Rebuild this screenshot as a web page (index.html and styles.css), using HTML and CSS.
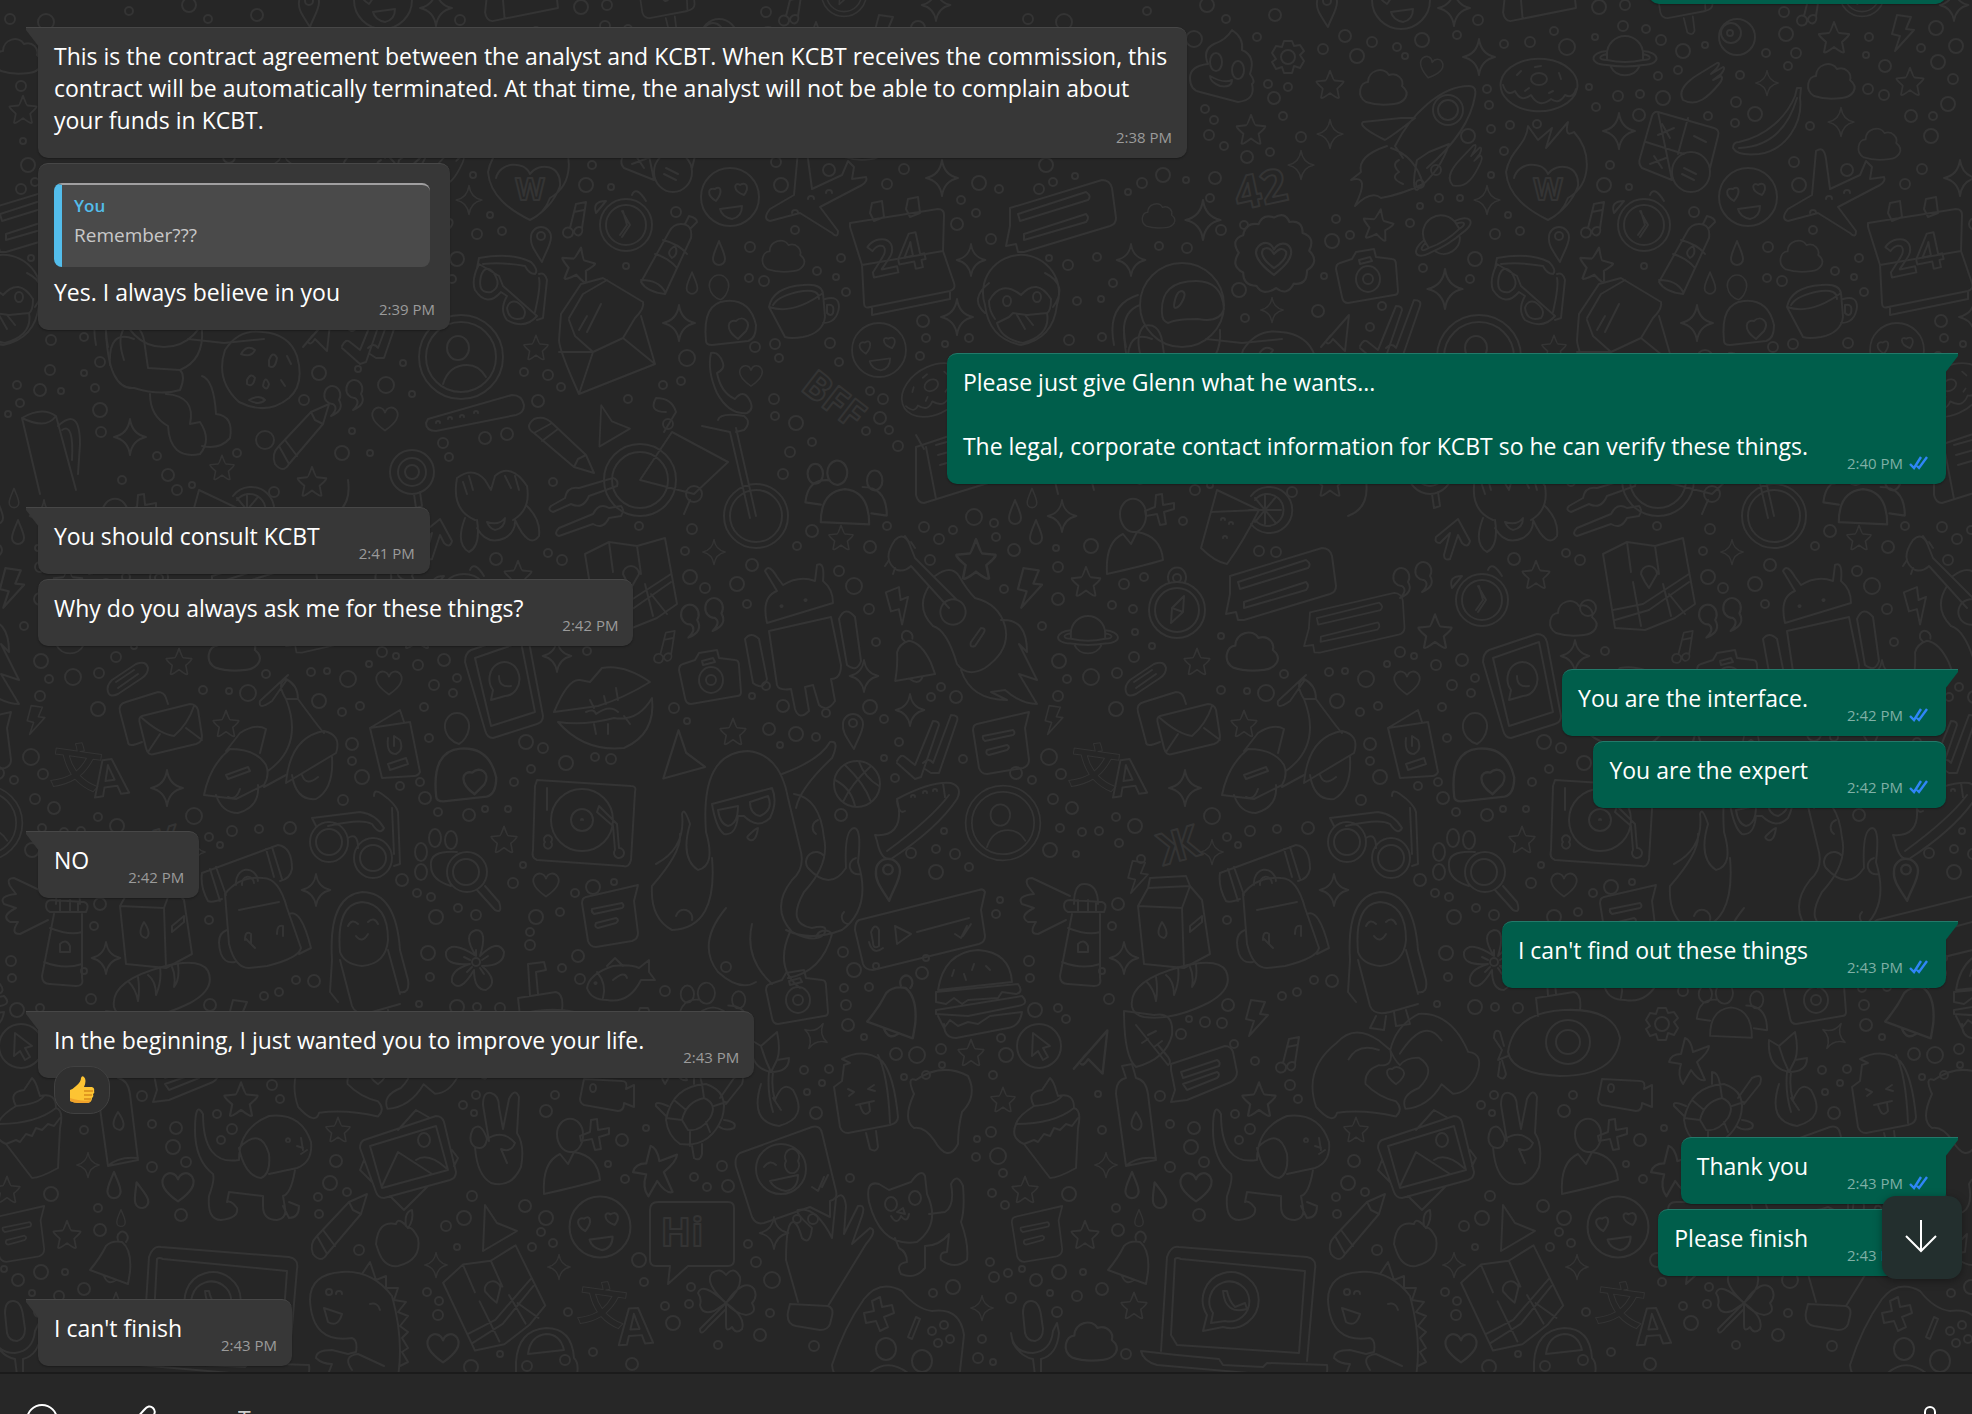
FILE: index.html
```html
<!DOCTYPE html>
<html lang="en">
<head>
  <meta charset="UTF-8">
  <meta name="viewport" content="width=device-width, initial-scale=1.0">
  <title>Chat</title>
  <link rel="stylesheet" href="styles.css">
</head>
<body>
  <svg class="sprite" width="0" height="0" aria-hidden="true">
    <symbol id="ticks" viewBox="0 0 20 14">
      <path d="M1 8l4 4L12 1M8 10l2 2L18 1" fill="none" stroke="#2f86f7" stroke-width="2.4"/>
    </symbol>
  </svg>

  <main class="chat">
    <svg class="wallpaper" id="wallpaper" aria-hidden="true"></svg>

    <div class="messages">
      <div class="bubble out earlier"></div>

      <div class="bubble in first long">
        <p class="text">This is the contract agreement between the analyst and KCBT. When KCBT receives the commission, this contract will be automatically terminated. At that time, the analyst will not be able to complain about your funds in KCBT.</p>
        <div class="meta">2:38 PM</div>
      </div>

      <div class="bubble in">
        <div class="quote">
          <div class="quote-name">You</div>
          <div class="quote-text">Remember???</div>
        </div>
        <p class="text">Yes. I always believe in you</p>
        <div class="meta">2:39 PM</div>
      </div>

      <div class="bubble out first">
        <p class="text">Please just give Glenn what he wants...<br><br>The legal, corporate contact information for KCBT so he can verify these things.</p>
        <div class="meta">2:40 PM <svg class="ticks"><use href="#ticks"/></svg></div>
      </div>

      <div class="bubble in first">
        <p class="text">You should consult KCBT</p>
        <div class="meta">2:41 PM</div>
      </div>
      <div class="bubble in">
        <p class="text">Why do you always ask me for these things?</p>
        <div class="meta">2:42 PM</div>
      </div>

      <div class="bubble out first">
        <p class="text">You are the interface.</p>
        <div class="meta">2:42 PM <svg class="ticks"><use href="#ticks"/></svg></div>
      </div>
      <div class="bubble out">
        <p class="text">You are the expert</p>
        <div class="meta">2:42 PM <svg class="ticks"><use href="#ticks"/></svg></div>
      </div>

      <div class="bubble in first">
        <p class="text">NO</p>
        <div class="meta">2:42 PM</div>
      </div>

      <div class="bubble out first">
        <p class="text">I can't find out these things</p>
        <div class="meta">2:43 PM <svg class="ticks"><use href="#ticks"/></svg></div>
      </div>

      <div class="bubble in first reacted">
        <p class="text">In the beginning, I just wanted you to improve your life.</p>
        <div class="meta">2:43 PM</div>
        <button class="reaction" aria-label="Thumbs up">
          <svg width="26" height="28" viewBox="0 0 26 28">
            <path d="M1 14Q4 13 7 10Q12 6 12 2Q13-1 15 1Q18 4 15 11H23Q26 12 25 15Q26 17 24 18Q25 21 23 22Q23 26 19 27H10Q5 27 1 25Z" fill="#fdc433"/>
            <path d="M15 15h9M15 19h8M15 23h7" stroke="#d98a1b" stroke-width="1.5" fill="none"/>
            <path d="M1 25Q5 27 10 27H19Q22 26 22 24Q14 26 1 22Z" fill="#f0a22b"/>
          </svg>
        </button>
      </div>

      <div class="bubble out first">
        <p class="text">Thank you</p>
        <div class="meta">2:43 PM <svg class="ticks"><use href="#ticks"/></svg></div>
      </div>
      <div class="bubble out">
        <p class="text">Please finish</p>
        <div class="meta">2:43 PM <svg class="ticks"><use href="#ticks"/></svg></div>
      </div>

      <div class="bubble in first">
        <p class="text">I can't finish</p>
        <div class="meta">2:43 PM</div>
      </div>
    </div>

    <button class="scroll-down" aria-label="Scroll to latest">
      <svg width="32" height="34" viewBox="0 0 32 34">
        <path d="M16 1V32M1 17L16 32L31 17" fill="none" stroke="#fff" stroke-width="2"/>
      </svg>
    </button>
  </main>

  <footer class="composer">
    <button class="tool" aria-label="Emoji">
      <svg width="32" height="34" viewBox="0 0 32 34" fill="none" stroke="#fff" stroke-width="2">
        <circle cx="16" cy="18" r="15"/>
        <path d="M9 22Q16 29 23 22M11 14v1M21 14v1"/>
      </svg>
    </button>
    <button class="tool" aria-label="Attach">
      <svg width="32" height="34" viewBox="0 0 32 34" fill="none" stroke="#fff" stroke-width="2">
        <path d="M3 18L12 8Q17 2 21 6Q25 10 20 15L10 26"/>
      </svg>
    </button>
    <input class="entry" type="text" aria-label="Message" placeholder="Type a message">
    <button class="tool" aria-label="Voice message">
      <svg width="32" height="34" viewBox="0 0 32 34" fill="none" stroke="#fff" stroke-width="2">
        <rect x="11" y="5" width="10" height="18" rx="5"/>
        <path d="M6 18Q6 28 16 28Q26 28 26 18M16 28v5"/>
      </svg>
    </button>
  </footer>

  <script src="wallpaper.js"></script>
</body>
</html>
```

FILE: styles.css
```css
* {
  box-sizing: border-box;
}
body {
  margin: 0;
  height: 100vh;
  display: flex;
  flex-direction: column;
  overflow: hidden;
  background-color: #262626;
  color: #fff;
  font-family: "Segoe UI", "Open Sans", "Noto Sans", sans-serif;
}
button {
  padding: 0;
  border: none;
  background: none;
  cursor: pointer;
}
.sprite {
  position: absolute;
}

/* chat area */
.chat {
  flex: 1;
  min-height: 0;
  position: relative;
  display: flex;
  flex-direction: column;
  justify-content: flex-end;
  overflow: hidden;
}
.wallpaper {
  position: absolute;
  top: 0;
  left: 0;
  width: 100%;
  height: 100%;
  fill: none;
  stroke: #343434;
  stroke-width: 2;
  stroke-linejoin: round;
  stroke-linecap: round;
}
.wallpaper text {
  font-family: "Open Sans", "Noto Sans CJK SC", sans-serif;
  font-weight: 700;
  text-anchor: middle;
}
.messages {
  position: relative;
  display: flex;
  flex-direction: column;
  gap: 5px;
  padding: 0 26px 6px 38px;
}

/* bubbles */
.bubble {
  position: relative;
  max-width: 1149px;
  padding: 12px 15px 11px 16px;
  border-top: 1px solid;
  border-radius: 10px;
  box-shadow: 0 1px 2px rgba(0,0,0,0.3);
}
.in {
  align-self: flex-start;
  background-color: #373737;
  border-color: #474747;
}
.out {
  align-self: flex-end;
  background-color: #005e4b;
  border-color: #23796a;
}
.earlier {
  width: 297px;
  height: 67px;
}
.first {
  margin-top: 18px;
}
.in.first {
  border-top-left-radius: 0;
}
.out.first {
  border-top-right-radius: 0;
}
.first::before {
  content: "";
  position: absolute;
  top: -1px;
  width: 13px;
  height: 19px;
  background-color: inherit;
  border-top: 1px solid;
  border-color: inherit;
}
.in.first::before {
  left: -12px;
  clip-path: polygon(0 0, 100% 0, 100% 100%, 0 3px);
}
.out.first::before {
  right: -12px;
  clip-path: polygon(0 0, 100% 0, 100% 3px, 0 100%);
}
.text {
  margin: 0;
  font-size: 23px;
  line-height: 32px;
}
.in .text {
  padding-right: 95px;
}
.out .text {
  padding-right: 123px;
}
.in.long .text {
  padding-right: 0;
}
.meta {
  display: flex;
  justify-content: flex-end;
  align-items: center;
  gap: 6px;
  margin-top: -9px;
  font-size: 15px;
  line-height: 20px;
  color: #9b9b9b;
}
.out .meta {
  padding-right: 2px;
  color: #7fb0a6;
}
.ticks {
  width: 20px;
  height: 14px;
}

.quote {
  margin: 7px 5px 9px 0;
  height: 84px;
  padding: 9px 12px;
  background-color: #4a4a4a;
  border-top: 2px solid #a09fa0;
  border-left: 8px solid #53bdeb;
  border-radius: 8px;
  line-height: 24px;
}
.quote-name {
  font-size: 17px;
  font-weight: 600;
  color: #53bdeb;
}
.quote-text {
  margin-top: 5px;
  font-size: 19px;
  color: #c8c8c8;
}

.reacted {
  margin-bottom: 36px;
}
.reaction {
  position: absolute;
  left: 16px;
  bottom: -36px;
  display: flex;
  justify-content: center;
  align-items: center;
  width: 56px;
  height: 48px;
  background-color: #303030;
  border: 1px solid #414141;
  border-radius: 20px;
}

.scroll-down {
  position: absolute;
  right: 10px;
  bottom: 93px;
  display: flex;
  justify-content: center;
  align-items: center;
  width: 80px;
  height: 83px;
  padding: 0 2px 4px 0;
  background-color: #232f2e;
  border-radius: 14px;
  box-shadow: 0 2px 8px rgba(0,0,0,0.35);
}

/* message box */
.composer {
  flex: none;
  display: flex;
  align-items: flex-start;
  gap: 74px;
  height: 42px;
  padding: 28px 26px 0;
  border-top: 2px solid #1b1b1b;
  background-color: #272727;
  overflow: hidden;
}
.tool {
  width: 32px;
  height: 34px;
}
.entry {
  flex: 1;
  height: 34px;
  padding: 0;
  border: none;
  outline: none;
  background: none;
  color: #fff;
  font-family: inherit;
  font-size: 23px;
}
.entry::placeholder {
  color: #cfcfcf;
}
```

FILE: wallpaper.js
```javascript
// Outline doodles, each drawn around 0,0
const doodles = {
  star: 'M0-16Q4-5 5-5L15-4Q16-3 8 4L10 14Q9 16 0 9Q-9 16-10 14L-8 4Q-16-3-15-4L-5-5Q-4-5 0-16Z',
  sparkle: 'M0-18Q2-3 16 0Q2 3 0 18Q-2 3-16 0Q-2-3 0-18Z',
  heart: 'M0 14C-10 7-17-1-13-8C-9-14-2-12 0-6C2-12 9-14 13-8C17-1 10 7 0 14Z',
  cloud: 'M-18 16C-28 10-24-4-16-4C-16-16 0-20 5-11C14-14 20-6 18 0C28 8 20 17 10 18Q-6 20-18 16Z',
  bolt: 'M-6-18 8-16 3-4 11-3-8 18-3 3-11 1Z',
  drop: 'M0-12C3-4 6 1 6 6A6 6 0 0 1-6 6C-6 1-3-4 0-12Z',
  egg: 'M0-15C8-15 13-7 12 0C11 8 6 14 2 16C-5 14-11 8-12 0C-13-7-8-15 0-15Z',
  saturn: 'M-18-2A18 18 0 0 1 18-2M-14 11A15 13 0 0 0 14 11M-18-5C-34-4-38 8-18 9Q0 12 18 9C38 8 34-4 18-5M-18-2C-28 0-26 4-18 4Q0 8 18 4C26 4 28 0 18-2M-18-5V4M18-5V4',
  donut: 'M-38-4A38 26 0 1 1 38 4A38 26 0 1 1-38-4ZM-8-6A8 6 0 1 1 8-6A8 6 0 1 1-8-6ZM-36 0Q-32 12-24 6Q-18 18-8 10Q0 24 12 14Q20 20 26 10Q34 14 37 4M-22-10-18-14M-4-18 2-19M20-12 22-6M-14 6-10 3M10 8 14 6',
  comet: 'M-20 18C-26 8-14-2-4-8L14-19Q18-20 14-14L8-8 20-15Q23-14 18-8L10-2 18-6Q21-4 16 2C6 14-6 26-20 18Z',
  rocket: 'M-18 28-26 16C-10-16 20-44 48-44Q56-44 54-34C50-10 34 14 6 38M12-20A15 15 0 1 1 42-20A15 15 0 1 1 12-20ZM17-20A10 10 0 1 1 37-20A10 10 0 1 1 17-20ZM-20-12-58-8Q-64-4-36 10-26 4-6-12ZM8 22 28 14Q20 40-4 60Q-10 60-4 30ZM-30 18Q-6 26 2 54M-34 16Q-64 26-60 42L-70 50Q-50 44-66 76Q-50 60-40 68Q-18 64 2 54M-22 30Q-30 34-22 42Q-32 48-18 54',
  face: 'M-29 0A29 29 0 1 1 29 0A29 29 0 1 1-29 0ZM-14 4C-24-2-22-10-15-8C-10-12-6-6-14 4ZM14-2C2-6 4-16 10-12C16-16 20-10 14-2ZM-10 12 12 9Q12 20 2 22Q-8 20-10 12Z',
  pin: 'M1 19C-6 8-11 2-10-6A10 10 0 0 1 10-6C10 2 4 10 1 19ZM-4-7A4 4 0 1 1 4-7A4 4 0 1 1-4-7Z',
  note: 'M-30-16 24-34Q30-34 32-28L36-8Q36-2 30 2L-14 20-30 22-26 10-30-10ZM-20-8 16-20Q20-18 18-14L-18-2ZM-18 4 16-8Q20-6 16-2L-14 10Z',
  msg: 'M-24-18 28-30 24-14 28 18Q28 24 22 26L-14 32Q-20 32-22 26L-28-12Q-28-17-24-18ZM-18-6 12-12Q15-9 12-7L-16-1Q-19-3-18-6ZM-14 8 6 3Q10 5 6 8L-12 13Q-16 12-14 8Z',
  eye: 'M-18 0A18 18 0 1 1 18 0A18 18 0 1 1-18 0ZM-16-4A10 10 0 1 1 4-4A10 10 0 1 1-16-4ZM-10-4A3 3 0 1 1-4-4A3 3 0 1 1-10-4Z',
  popsicle: 'M-22-36Q0-48 18-34Q30-20 34 22Q34 28 26 30L-16 38Q-22 38-24 32L-30-8-22-14-20-30-14-32ZM14-40Q24-20 26 28M2 38 6 54Q12 58 14 52L12 36M-16-6-10-3-15 1M10-10 4-6 11-4M-8 10 10 6M-4 10Q0 24 6 16L5 8',
  calc: 'M-22-38 34-22Q40-20 38-14L30 18M-8 30-38 18Q-42 14-40 8L-28-34Q-26-39-22-38ZM-8 22A19 20 0 1 1 30 22A19 20 0 1 1-8 22ZM-18-26-10-12M-22-15-6-22M14-14 26-8M-26 6-18 18M-30 14-14 8M4 18 16 24M2 24 14 30M8-32-2 4M-34-8 4 4',
  banana: 'M30-34 34-34 33-24C36 0 20 28-8 32Q-30 34-34 26Q-34 20-28 20C0 14 20-6 28-26ZM-28 26Q16 24 30-24',
  flame: 'M0 46C-20 36-40 22-42-2C-38-24-22-28-20-48L-10-34 4-46-2-26 20-52Q16-36 26-42C44-22 44 10 20 24Q14 40 0 46M0 0C-6-14-30-12-34 4M0 0C8-12 32-10 30 12Q22 34 0 46',
  plane: 'M-14-44Q-6-50-4-36L0-6 30-20 36-34 42-28 40-16 54-18Q56-14 50-10L8 12 26 36Q26 44 20 38L-12 18-42 26Q-50 24-42 14L-18 0ZM-20 18A3 3 0 1 1-14 18M-4 4A3 3 0 1 1 2 4M14-2A3 3 0 1 1 20-2',
  music: 'M-4 8 2-16 12-18 8 8M0-8 10-10M-4 8A5 5 0 1 1-11 12A5 5 0 0 1-4 8M8 8A4 5 0 1 1 0 12A5 5 0 0 1 8 8',
  alarm: 'M-26 0A26 26 0 1 1 26 0A26 26 0 1 1-26 0ZM-20 0A20 20 0 1 1 20 0A20 20 0 1 1-20 0ZM-3-14 1 0-6 10M-30-12Q-34-24-20-24ZM6-30Q10-40 20-24M-4-14 4 0-4 12',
  bottle: 'M12-36Q24-36 22-22L-4 34Q-22 32-28 22L0-28Q4-36 12-36ZM16-36 20-44Q28-42 28-38L22-32M-14-6Q0-2 8 8M-6-20Q10-16 18-6M-28 20Q-10 20-4 32M3-2Q-4-8 6-14Q10-6 3-2Z',
  calendar: 'M-46-34 42-48Q48-48 48-42L47-6-34 8-46-30ZM-34 8-32 46Q-32 52-26 50L54 34Q60 32 58 26L47-6M-24 50-24 58 54 42 54 34M-26-44-24-54-14-56-12-40-22-36ZM10-48 12-58 22-60 24-44 14-40Z',
  camera: 'M-28-14-16-18-12-25 6-28 8-20 24-18Q28-18 28-12L30 14Q30 18 26 18L-20 26Q-25 26-26 20L-32-8Q-32-13-28-14ZM-12 2A12 13 0 1 1 12 2A12 13 0 1 1-12 2ZM-5 2A5 5 0 1 1 5 2A5 5 0 1 1-5 2ZM-9-17 2-20 4-16-8-13Z',
  shades: 'M-32-32Q0-38 20-28Q28-20 24-16Q18-16 14-24Q-8-28-28-26M-32-32-34-22M28-16Q34-18 36-10L32 28 26 30M28-12Q30-4 24 22M-32-26Q-40-10-36 0Q-24 18-10 2L-4 6Q-12 20-4 30Q14 40 26 26L-8-4-12-14ZM-30-14Q-34 4-20 2Q-8-4-18-18Q-26-26-30-14ZM-4 18Q-2 32 12 28Q18 20 6 12Q-2 10-4 18Z',
  envelope: 'M-46 20-44-6-24-36-2-42 38-18Q40-12 30-2L18 18M-46 20Q-46 30-26 74L50 44 36-4M-46 32-12 32-26 74M-12 32 18 18 50 44M-36-2-22-26 2-40M-4-16-18 12M-18-4-26 10M-36 0-30 16-12 32',
  mail: 'M-34-20-2-30Q4-30 6-24L8-18M-34-20Q-42-18-40-10L-32 20Q-32 26-18 20M-18-6 30-18Q36-18 38-12L42 14Q42 20 36 22L-6 32Q-12 34-14 26L-20 2Q-22-5-18-6ZM-18-4Q0 12 14 14Q28 2 34-16M-12 30 0 12M42 18 26 6',
  cup: 'M-34-6Q-30-26 0-28Q18-30 20-20L22 4Q20 20 0 24Q-12 26-18 24ZM-34-6Q-10 2 20-20M-30-8Q-24-18 0-22Q16-24 16-14M22-14Q36-18 36-6Q34 10 20 10M24-8Q32-10 30 0Q28 4 24 0Z',
  blob: 'M-24 18Q-28-20-4-22Q20-24 26 2Q26 16 18 18L-18 22Q-24 22-24 18ZM8 16C-6 6-2-4 6-2C12-8 22-2 16 8Z',
  checks: 'M-32 16Q-28 8-24 12L-14 20 4-24Q10-24 10-20L-8 32-14 34-32 18M-6 18Q0 12 4 18L22-30Q30-30 28-24L10 28 2 28-4 24',
  dart: 'M-16 14 12-18 8 18-4 6Q-8 12-10 10M-16 14-6 2',
  avatar: 'M-42 0A42 42 0 1 1 42 0A42 42 0 1 1-42 0ZM-35 0A35 35 0 1 1 35 0A35 35 0 1 1-35 0ZM-14-9A11 12 0 1 1 8-9A11 12 0 1 1-14-9ZM-18 27Q-12 8 6 8Q18 8 25 20',
  lines: 'M-50-14 42-42Q50-42 52-34L56-4Q56 2 50 4L-36 30-42 30-44 22-54 24-50 4ZM-42-8 26-30Q32-26 28-22L-40-1ZM-36 12 26-8Q30-4 26 0L-36 18Z',
  badge: 'M0-34Q10-40 14-30Q26-32 26-20Q38-16 32-4Q42 6 30 14Q30 28 18 26Q12 38 2 30Q-10 38-16 28Q-28 28-28 16Q-40 10-32-2Q-40-14-28-18Q-26-30-14-28Q-10-38 0-34ZM0 18C-14 8-20-2-14-8C-8-14-2-10 0-5C4-12 12-12 15-6C18 2 10 10 0 18ZM0 12C-8 6-13 0-10-5C-6-8-2-5 0-1C4-6 8-7 11-3C12 3 6 8 0 12Z',
  monkey: 'M-32 0A38 38 0 1 1 40 0Q36 34 4 40Q-28 34-32 0ZM-32 8Q-48-6-28-22M28-32Q52-20 36 2M4-10Q-16-26-28-4Q-28 6-22 14M4-10Q20-28 34-6Q34 6 30 8M-14-4A4 5 0 1 1-6-4A4 5 0 1 1-14-4ZM16-8A4 5 0 1 1 24-8A4 5 0 1 1 16-8ZM-20 18-8 12-4 8 10 10 30 8Q34 30 6 38Q-16 34-20 18ZM0 10 8 24M8 10 16 20',
  astronaut: 'M-42 0A42 42 0 1 1 42 0A42 42 0 1 1-42 0ZM-20 8Q-22-24 14-24Q40-24 42 4Q38 18 16 14Q-6 14-14 18Q-20 16-20 8ZM-8 0Q-6-14 0-14Q6-12-2 0Q-8 6-8 0ZM-44-10Q-76 0-68 40M-42 0Q-64 8-56 42M-30 34Q-56 24-54 60M24 34 60 38 100 34',
  poop: 'M8-38Q2-28-10-24Q-22-18-16-4Q-34-2-34 10Q-34 22-24 24L14 34Q32 32 28 16Q32 14 26 6Q32-12 18-18Q20-30 8-38ZM-14-6A6 9 0 1 1-2-6A6 9 0 1 1-14-6ZM8 2A6 9 0 1 1 20 2A6 9 0 1 1 8 2ZM-14 8Q0 16 8 12Q8 20-4 18Q-14 14-14 8Z',
  gear: 'M-4-16H4L6-11 12-12 16-6 12-2 16 4 12 11 6 9 4 16H-4L-6 10-12 12-16 5-12 2-16-4-12-11-6-10ZM-7 0A7 7 0 1 1 7 0A7 7 0 1 1-7 0Z',
  phone: 'M-18-32Q-10-34-6-22Q-4-16-12-12Q-8 8 6 14Q14 4 20 14Q26 24 18 28Q0 30-12 8Q-22-14-18-32Z',
  pencil: 'M-26 24Q-30 14-22 6L10-28 28-36 22-16-12 24Q-18 34-26 24ZM-22 6-12 24M-16 0-4 16M10-28 14-20 22-16',
  quotes: 'M-8 0A8 9 0 1 0-14 4Q-8 8-16 16Q-2 10-8 0ZM14-6A8 9 0 1 0 8-2Q14 2 6 10Q20 4 14-6Z',
  toggle: 'M-48 6 36-18Q46-18 48-8Q48 0 40 2L-40 18Q-50 18-50 10ZM-40 10A2 2 0 1 1-36 10M-28 6A2 2 0 1 1-24 6M-16 4A2 2 0 1 1-12 4M-2 0A2 2 0 1 1 2 0',
  cookie: 'M-34-20Q-20-42 4-38Q30-36 38-14Q46 14 30 28Q8 46-20 32Q-44 10-34-20ZM-18-16Q-12-26-4-20Q-8-12-18-16ZM10-10Q14-20 18-12Q16 0 10-4ZM-12 10Q-8 2-4 8Q-6 18-12 14ZM4 16Q6 4 10 14Q8 22 4 16ZM-10 30Q0 24 6 30Q0 36-10 30ZM28-14 32-6M22 10 26 16',
  teddy: 'M-36 0Q-44-24-34-34Q-20-38-16-20L-12 8 20 10Q26 16 20 30Q0 36-26 28Q-52 30-54-30M20 10Q44 0 42-30M-10 34Q-10 56 8 66Q10 100 40 94Q52 80 40 62L30 64Q36 36 6 34M42 16Q54 20 56 54Q74 56 70 78Q60 90 42 86',
  mug: 'M-24-22Q-4-34 10-24L30 50M-24-22-6 54M-24-22Q0-10 10-24M12-14Q34-34 34 4L32 34M16-10Q28-18 26 20',
  thumb: 'M-14 6Q8-2 4-30 8-52Q22-48 22-24L40 4Q48 26 24 40L-2 48Q-24 50-22 36Q-30 32-26 20Q-30 10-22 4ZM-24 20H-4M-22 36H-4M-22 4H-2M42-4 54-6 54 32 44 34',
  lolly: 'M-22 0A22 22 0 1 1 22 0A22 22 0 1 1-22 0ZM-14 0A14 14 0 1 1 14 0A14 14 0 1 1-14 0ZM-7 0A7 7 0 1 1 7 0A7 7 0 1 1-7 0ZM2 22 4 36 10 34 8 20',
  dogface: 'M-20 10Q-44 0-38-32Q-22-44-10-30L-4-20 0-34Q16-48 32-24Q36 0 18 10M-30 8Q-40 34-26 42Q-14 36-18 10M20 10Q34 40 44 26Q46 10 32-4M-18 18Q-8 36 10 28Q20 22 20 12M-8 12Q4 16 10 8Q10 18 0 20Q-6 18-8 12ZM-26-34-22-20M-32-28-28-16M10-34 16-22M20-34 24-20',
  sliders: 'M-34-4-20-12Q-18-24-6-22L28-32Q34-30 32-24L4-14Q-2 0-14-6L-32 2Q-38 0-34-4ZM-26 18 8 4Q14-8 24-2L36-4Q40 0 36 6L24 8Q18 20 8 14L-26 26Q-32 24-26 18Z',
  drink: 'M-16-40 26-20Q10 12-6 34-18 32-32 18ZM-22-18 26-20M18-34A23 23 0 1 1 18-6M22-30A16 16 0 1 1 22-10M32-36V-6M16-20H48M22-32 42-8M22-8 42-32M-12-10A2 2 0 1 1-8-10M-4-6A2 2 0 1 1 0-6M-10 8A2 2 0 1 1-6 8',
  compass: 'M-28 0A28 28 0 1 1 28 0A28 28 0 1 1-28 0ZM-22 0A22 22 0 1 1 22 0A22 22 0 1 1-22 0ZM-8-28A9 10 0 1 1 8-28M-4-32A4 4 0 1 1 4-32A4 4 0 1 1-4-32ZM7-14 6 2-6 13-5-2ZM-5-2 6 2',
  map: 'M-46-28-22-40 6-36 34-44 46 22 26 36-4 48-34 46ZM-22-40-18-10M-16 0-8 44M6-36 10-8M14 2 22 34M-36 28-6 22 40-8M-34 38 0 28 40 0M-4 0-8-8A8 8 0 1 1 8-8L0 6ZM20 12 36 32',
  arrowup: 'M-16 0 6-18 18 4Q16 12 10 6L6-2-2 22Q-8 24-8 18L-2-4-12 6Q-18 6-16 0Z',
  clip: 'M-20 14Q-22 8-16 2L8-14Q18-18 20-10Q20-4 14 0L-10 16Q-18 20-20 14ZM-10 10 10-4M-12 4 6-8',
  mobile: 'M-32-30 16-46Q24-46 26-38L40 36Q40 42 34 44L-10 58Q-16 58-18 50L-38-18Q-38-27-32-30ZM-28-22 18-38 32 32-12 46ZM-12 20-10 10A15 17 0 1 1 2 16ZM-4-4Q-4 8 8 6',
  lips: 'M-50 12Q-36-22-24-20L-14-18-2-32Q20-36 46-18Q20-2-6 6ZM-46 22Q-20 26 10 18Q34 22 48-2Q52 34 20 48Q-20 52-46 22ZM-14 0-10 8M0-4 2 4M12-12 14 0M-18 12Q-10 8-8 14Q6 4 14 12M-10 24-8 34M4 24 4 34M20 16 26 24',
  scooter: 'M-66 30Q-60 0-40-16Q-14-16-4 0Q0 10-6 20L-34 34ZM-44-14-30-32Q-14-42-4-36L-10-12M16-66Q34-20-2 6M16-66Q6-82 16-86Q28-80 28-66ZM28-66Q50-36 54-32M16-84 2-64Q-12-54-10-64L18-90M16 18Q20-28 54-34Q72-30 66-12ZM22 10Q26 36 46 34Q64 24 62-8M32 10Q36 22 48 12M-54 30Q-48 48-32 48Q-10 42-12 20M-42 32Q-34 36-30 24M-44 10-22 2-20 6-42 14ZM-6 22 16 10',
  passport: 'M-26-14 14-20 24 30Q22 34 18 34L-14 36ZM-26-14 4-32 8-20M-8-4Q-10 12 0 12Q8 8 4-2L-2-6V4M-8 22 10 16 12 22-6 28Z',
  turntable: 'M-46-40 48-34Q54-34 52-28L48 40Q46 48 40 46L-46 40Q-52 38-50 30L-48-34ZM-32 0A31 31 0 1 1 30 0A31 31 0 1 1-32 0ZM-12 0A11 11 0 1 1 10 0A11 11 0 1 1-12 0ZM-2 0A1 1 0 1 1 0 0M16-14 34 4 36 28A5 5 0 1 1 32 30L30 6 14-8ZM-36-32V-10M-38 22A4 4 0 1 1-32 22A4 4 0 1 1-38 22Z',
  glasses: 'M-46-24 2-30Q18-28 26-14Q22-6 14-18Q4-24-30-16M-46-24-42-16M16-46Q16-54 24-48Q38-38 40-30L42 22 36 24M34-34 36 12M-48 0A19 20 0 1 1-10 0A19 20 0 1 1-48 0ZM-42 0A13 13 0 1 1-16 0A13 13 0 1 1-42 0ZM-4 16A19 20 0 1 1 34 16A19 20 0 1 1-4 16ZM2 16A13 13 0 1 1 28 16A13 13 0 1 1 2 16ZM-10-4Q0-10 0 6',
  magnifier: 'M-6 2A20 20 0 1 1 34 2A20 20 0 1 1-6 2ZM0 2A13 13 0 1 1 26 2A13 13 0 1 1 0 2ZM24 20 42 40Q50 44 46 32L32 16M-2 16Q-22 10-22-4Q-24-20 4-18M-38-18A6 9 0 1 1-26-18A6 9 0 1 1-38-18ZM-24-32A6 9 0 1 1-12-32A6 9 0 1 1-24-32ZM-8-30A6 9 0 1 1 4-30A6 9 0 1 1-8-30ZM-38 2A6 8 0 1 1-26 2A6 8 0 1 1-38 2Z',
  roll: 'M-46-2 30-30Q44-28 44-6Q42 4 32 6M-46-2Q-48 12-40 26Q-36 28-26 24M-38-6-28 26M-32-8-22 20M18-26 26 2M24-28 34 4M-12 10A10 12 0 0 1 10 6M-6 10A5 6 0 0 1 6 8',
  backpack: 'M-30 36-34-14Q-20-32 4-30Q20-30 28 0L42 40Q40 50 8 58L-10 60Q-24 60-30 36ZM-32 22Q-44 26-38 46Q-34 56-24 54M30 6Q42 0 52 40L40 46M-8 36V26Q-14 22-14 32M24 28V18Q18 16 18 26M-14 30-4 40M-20 2 20-6',
  girl: 'M-34 20Q-38-44-4-48Q30-48 34 10L42 40Q44 54 34 52M-26 12Q-30-36-4-38Q22-36 22 0Q20 24-4 26Q-22 24-26 12ZM-18-14Q-14-22-8-16M2-18Q8-24 12-16M-10-4Q-4 4 2-6M-34 20-36 52-28 62M-26 20-14 66Q-10 76 6 72L34 64M22 10 34 54M-8 76-14 88 0 90 2 76M10 72 12 86 26 84 22 70',
  milk: 'M-32-12-22-30-20-40 16-42 20-32 32-18 40 36 14 50-26 46ZM-32-12 12-10 20-32-22-30M12-10 14 50M-8 4Q0 16-6 20Q-16 18-8 4ZM20 8 32-2 32 4 20 14Z',
  lighthouse: 'M-14-24Q-14-44-4-44Q10-44 10-24M-24-22Q-24-28-18-28L14-26Q20-24 16-16L-20-16Q-24-18-24-22ZM-10-28V-16M0-28V-16M8-26V-16M-16-14-28 48Q-28 56-20 56L6 58Q14 58 12 50L12-14M-20 0Q0 8 12 4M-26 34Q-6 42 12 36M-10 24V16Q-4 10 0 18V24ZM-18-32-56-50Q-64-50-60-42L-54-34Q-72-32-66-24L-54-20Q-70-12-60-6L-52-6Q-60 6-50 6L-22-8',
  bread: 'M-48 22Q-52-4 0-18Q38-28 46-14Q54 4 28 18Q-8 36-36 32Q-46 30-48 22ZM-34-4Q-26 4-24 16Q-22 4-24-8M-14-10Q-6-4-6 10 0-4-2-18M10-18Q14-10 12 2Q18-6 16-20',
  flower: 'M0-6Q-14-28 0-32Q12-32 4-6Q22-24 28-10Q28 4 6 4Q24 20 10 28Q-2 28-2 8Q-16 32-24 20Q-26 8-6 2Q-32 4-30-10Q-24-22 0-6ZM-4 0A4 4 0 1 1 4 0A4 4 0 1 1-4 0ZM0-6V-12M6-2 12-6M4 6 8 12M-4 5-9 10M-6-2-12-5',
  submarine: 'M-56 10Q-50-30 0-32Q50-34 56-4Q52 34-4 34Q-52 32-56 10ZM-18 0A22 22 0 1 1 26 0A22 22 0 1 1-18 0ZM-8 0A12 12 0 1 1 16 0A12 12 0 1 1-8 0ZM-26-26-28-44 10-50Q18-48 16-32M-16-46-18-78-2-80 0-72-10-70-8-48M-56 14-66 18-62 8-70-4Q-70-14-64-10L-60 4M-62 18-58 32Q-60 40-66 34L-64 20',
  fish: 'M-34 8Q-32-6-8-14Q10-16 18-12L28-20 28-8 34 0 20 0Q8 24-14 20-30 20-34 8ZM-24-8Q-14 4-18 18M-8 0Q4-10 6-2M-14-14-6-22 2-14M-26 4A1 1 0 1 1-25 4',
  cursor: 'M-22 0A22 22 0 1 1 22 0A22 22 0 1 1-22 0ZM-6-13 11 0 4 2 9 11 4 14-1 5-7 10Z',
  cupcake: 'M-12-18Q-20-32-4-34L4-46Q8-42 10-34L12-28Q28-32 28-16Q36-14 32 4L30 44Q12 54 4 54L-22 20Q-36 14-30 0Q-28-8-12-18ZM-22 20-12 16-8 18-2 10 4 12 8 4 14 6 20 0 26 2 32-6M-12-18Q10-20 16-28M-30 0Q8 0 28-16',
  tube: 'M-20-26Q-20-40-10-42L-14-54-4-56 0-42Q10-40 12-26L20 40-10 46ZM-10 46Q0 36 20 38M0-8Q10 6 2 10Q-10 8 0-8Z',
  dog: 'M-22 0Q-22-32 8-44Q40-48 50-18Q52 2 36 8L8 14M-22-12Q0-34 8-6Q10 14 0 18Q-16 16-22-12ZM-22 0Q-58 6-58-46Q-66-60-66-30Q-66 0-48 14Q-46 20-52 36Q-54 60-40 60Q-22 58-24 48Q-30 40-34 42L-32 32 2 36V46Q2 60 16 60Q26 58 24 48L22 36Q30 34 34 10M22 46 28 58Q38 58 38 46L28 42M26-18A2 2 0 1 1 28-18M40-22 42-10M36-14 42-12M40-6 46-10',
  picture: 'M-44-20 28-44Q34-44 36-38L48 12Q48 18 42 20L-24 38Q-30 38-32 32L-48-12Q-48-18-44-20ZM-38-14 28-34 40 10-26 28ZM-26 26-10-8 24 14M8 0Q20-8 38 8M10-20A6 7 0 1 1 22-20A6 7 0 1 1 10-20ZM-10-30 8-50 22-42M44-10 50-2 46 6M-18 36-4 50 20 26M-44 0-48 10-36 22',
  peace: 'M-14-4-20-40Q-20-54-12-52Q-4-50-4-38L0-16 6-46Q12-58 16-48L14-12Q22 0 18 22Q8 44-12 38Q-26 30-28 2Q-36-4-30-16Q-22-24-16-6M-16-6Q0-16 12-2Q8 8-2 4L4 18M-28 2Q-18 6-16-6',
  person: 'M-13-26A12 14 0 1 1 13-26A12 17 0 0 1 0-8A14 18 0 0 1-13-26ZM-26 34Q-28 2-10-6L-2 4 4-8Q28-4 30 20Q10 26-26 34Z',
  plus: 'M-3-15 3-16 4-5 15-7 15-1 5 2 7 14 1 15-2 4-13 6-14 1-4-3Z',
  video: 'M-22-16 16-14Q22-14 20-6L28-10V12L18 8Q18 16 12 16L-22 10Q-26 8-26 4ZM-16-7A3 4 0 1 1-10-7A3 4 0 1 1-16-7Z',
  apple: 'M-2-16Q-20-20-22 4L-20 10Q-14 28 0 26Q24 20 20-2Q14-14 10-12Q0-24-2-16M8-14Q6-28 14-30Q16-20 10-12',
  play: 'M-12-22 0-4 20 4-14 24Z',
  bell: 'M8-20Q18-12 16 10L14 22-24 8Q-14-4-8-16Q-2-22 8-20ZM4-22A5 6 0 1 1 12-20M-10 14Q-6 24 2 18',
  laptop: 'M-76 56-70-38Q-66-50-58-48L70-38Q80-36 78-26L70 66M-66 40-62-36Q-60-38-56-36L68-24 62 58-60 50ZM-96 56-60 60-18 64-14 70 26 72 30 68 90 70Q92 84 80 84L-80 70Q-94 66-96 56ZM-34 36-30 20A28 28 0 1 1-14 32ZM-26 28-24 18A20 20 0 1 1-12 26ZM-14-4Q-12 20 10 14L8 8-2 12Q-8 6-10-4Z',
  dino: 'M-10 18Q-50 24-52-20Q-52-46-20-48Q10-50 30-24Q42 20 36 56M-10 18Q-4 20-6 32L-14 34-30 30Q-46 30-46 38Q-40 44-30 44L-36 60M0-46 8-58 14-40 24-44 24-32 36-32 32-20 44-18 36-8 46-4 38 6 46 12 40 18 46 28 40 32 46 42 38 46M-36-28A3 3 0 1 1-30-28A3 3 0 1 1-36-28ZM-26-26A3 3 0 1 1-20-26M-38-12-20-6Q-24 8-34 2ZM8-16Q16-18 18-10M-10 50Q-20 36-4 34L22 46',
  car: 'M-30 0V-10Q-28-42 0-44Q26-44 28-14Q34-8 30 6M-18-18Q-16-36 0-38Q14-38 18-22ZM-24-6A5 5 0 1 1-14-6A5 5 0 1 1-24-6ZM14-12A5 5 0 1 1 24-12A5 5 0 1 1 14-12Z',
  mic: 'M-8-22Q-8-34 0-34Q8-34 10-20L12-6Q12 4 4 6Q-4 6-6-2ZM-20-2Q-18 18 2 18Q20 16 22-4L26-12 28-2Q26 20 10 24V40M-20-2-18 8Q-10 22 2 24L4 40',
  people: 'M-16-22A9 11 0 1 1 2-24A9 11 0 1 1-16-22ZM-36 4Q-34-18-14-16M-36 4-22 6M-34-22A7 9 0 1 1-20-22A7 9 0 1 1-34-22ZM-22 22Q-22-6 0-8Q22-6 22 24ZM20-16A7 9 0 1 1 34-16A7 9 0 1 1 20-16ZM16-10Q38-10 38 16L24 14',
  starfish: 'M-4-22Q2-20 4-8L20-14Q20-8 8 2L16 20Q10 22 2 10L-6 24Q-12 16-8 4L-20 2Q-18-6-8-6Z',
  turtle: 'M-32 8Q-26-26 8-28Q32-20 24 6Q12 36-18 32Q-30 24-32 8ZM-16 8Q-12-10 6-14Q20-8 12 6Q2 20-10 18ZM-32 6-16 8M4-28 6-14M28-10 16-6M12 20 8 10M-8 34-8 20M-24-12-12-2M22-14 36-34Q48-40 44-28L28-8M26 8Q40 10 36 16Q28 20 20 14M-30-6Q-44-12-42-6L-32 4M-6 34-4 46Q2 50 4 42V32M-4-28V-40Q2-40 4-28',
  tulip: 'M0 0Q-22-4-20-32L-10-26 6-40Q10-22 6-12L18-14Q18 0 0 0ZM0 0Q-6-12-10-26M0 0 6-12M-2 0Q-4 20 2 40M2 0Q0 16 4 28Q12 8 22 18Q38 46 8 54Q-22 50-10 12M2 26 10 38',
  burger: 'M-40-8Q-34-46 0-48Q32-46 34-16L-40-8ZM-42-6 40-14Q46-6 38-4L24-6 20 0-10 2-16 6-24 0-32 6-42 4ZM-42 12 44-2Q52 6 40 8L-10 18-42 16ZM-40 18-34 30-28 22-20 28-10 24 0 26 12 18 44 14Q42 28 30 30L-22 40Q-34 40-34 26M-24-28-26-22M-4-34-6-28M8-32 12-28M-14-24-12-18',
  leaf: 'M-26-34Q-10-32 4-30Q24-34 22-10Q16 14-14 22Q-26 12-26-34ZM-14-20 18 20Q22 18 18 12L8 0M-2-10 6-14M4 2 12-4M-2-6-8-2',
  wink: 'M-46-14 26-40Q34-42 36-34L50 24Q52 32 44 34L44 50 24 40-22 56Q-30 58-34 50L-50 0Q-52-10-46-14ZM-30 2A25 25 0 1 1 20 2A25 25 0 1 1-30 2ZM-22 0Q-16-8-10-2M0-6A7 8 0 1 1 12-6A7 8 0 1 1 0-6ZM-16 14 12 8Q12 22 0 24Q-12 22-16 14ZM26 20 32 24 38 10M36 20 42 8',
  cat: 'M-52-28Q-56-50-42-46L-32-40-10-48Q0-62 4-54L6-36Q20-6-4 12Q-40 18-52-28ZM-36-26A6 7 0 1 1-24-26A6 7 0 1 1-36-26ZM-12-32A6 7 0 1 1 0-32A6 7 0 1 1-12-32ZM-24-18-18-22-16-16ZM-30-14Q-24-4-20-14Q-14-6-12-16M8-16 24-18Q34-24 30-46Q36-58 42-44Q44-20 40-8Q48 14 46 30Q34 40 20 30Q18 22 26 22L28 4Q18 16 4 16V38Q-6 50-20 44Q-26 34-14 32Q-14 22-22 18L-26 8',
  hi: 'M-40-30 30-30Q36-30 36-24V28Q36 34 30 34H-10L-30 52-28 34H-42Q-48 34-48 28V-22Q-48-30-40-30Z',
  clover: 'M0 0Q-22-20-14-30Q-6-36 0-28Q8-38 14-26Q16-14 0 0Q18-26 28-14Q32-6 26 0Q32 10 20 12Q8 10 0 0Q20 14 16 26Q10 32 6 24Q0 30 0 22ZM0 0Q-24-22-28-10Q-24-4-26 2Q-24 12-12 8ZM0 0-26 26Q-26 34-18 24L0 6',
  okhand: 'M-26 22-38-20Q-38-60-30-58Q-26-56-22-42Q-14-34-12-52Q-30-68-26-70Q-8-74 8-42L12-82Q20-90 22-74L20-46 34-74Q42-76 38-64L28-36 46-52Q54-50 42-36L4 26M-34 24 4 26Q10 28 8 36L6 44Q4 50-4 50L-28 46Q-38 44-36 32Z',
  gamepad: 'M-72 20Q-60-18-40-46Q-24-66-2-54Q12-36 28-34Q56-38 60-10L54 44M-72 20Q-70 42-40 34Q-20 10 4 28L12 36M-32-44-24-48-22-38-12-40-10-32-20-28-16-18-24-14-28-24-38-22-40-32-30-34ZM-28 4A10 11 0 1 1-8 4A10 11 0 1 1-28 4ZM8 16A10 11 0 1 1 28 16A10 11 0 1 1 8 16ZM4-8 12-28 16-26 8-6ZM24-14A4 4 0 1 1 32-14A4 4 0 1 1 24-14ZM36-20A4 4 0 1 1 44-20A4 4 0 1 1 36-20ZM30-2A4 4 0 1 1 38-2A4 4 0 1 1 30-2ZM42-6A4 4 0 1 1 50-6A4 4 0 1 1 42-6Z',
  goo: 'M-28-26Q-36-44-26-40Q0-58 26-44Q36-24 20-8Q16 8 16 24Q6 44-8 20Q-18 6-28 8Q-40 0-28-26Z',
  hands: 'M-84 60Q-98 20-62-8Q-44-28-18-10L-6 0Q-2 18-18 16Q-34 22-32 36Q-18 50 0 54Q8 62 0 70-34 62-62 66Q-66 80-84 60ZM-6 0Q0-26 24-38Q58-40 76 2Q94 4 84 28Q74 46 60 46L48 36Q34 60 10 62Q4 48 24 40Q44 20 24 8Q10 8 4 16Q-2 10-6 0ZM-50 10Q-40-8-18 0M4 4Q30-36 48-10M0 36C-14 26-10 18-4 20Q0 16 6 20C12 24 6 32 0 36Z',
  bike: 'M-86 8A36 36 0 1 1-14 8A36 36 0 1 1-86 8ZM-78 8A28 28 0 1 1-22 8A28 28 0 1 1-78 8ZM34 44A32 32 0 1 1 98 44A32 32 0 1 1 34 44ZM40 44A26 26 0 1 1 92 44A26 26 0 1 1 40 44ZM-50 8-18-40 38-10 4 22ZM-24-60Q-42-60-34-74Q-18-74-14-60L-26-40M66 44 46-44M60 46 40-40 12-46M-4 22A8 8 0 1 1 12 22A8 8 0 1 1-4 22ZM0 28-6 42M28-52Q30-60 54-56Q62-50 54-42L46-40',
  android: 'M-28-22Q-34-48-18-54L-30-74Q-26-82-18-68L-12-60Q4-70 20-64L22-80Q30-84 28-64Q38-56 38-42ZM-26-14 36-28 46 20Q46 34 36 34L40 56Q32 68 24 60L18 40 10 42 14 66Q4 76 0 64L-4 44Q-16 46-18 40ZM-50-6Q-44-14-36-6L-28 34Q-32 46-42 38ZM44-26Q50-40 60-28L66 16Q62 28 52 20ZM-14-38A1 1 0 1 1-13-38M10-44A1 1 0 1 1 11-44',
  guitar: 'M-70-80Q-84-60-68-50Q-60-48-54-54L-16-12M-50-62-8-20M-70-80Q-60-90-54-72L-50-62M-60-84-56-78M-54-78-50-72M-76-60-80-54M-70-52-72-46M-24-4A12 12 0 1 1 0-12A12 12 0 0 1-24-4M-36-34Q-50-12-32 6Q-18 10-8 44Q2 58 20 48Q46 30 40 6Q34-16 10-22Q2-30-6-44Q-14-56-30-44M6 22 16 8Q22 8 18 14L10 26Q4 28 6 22ZM36 0Q62-2 62 32L54 24 72 60 54 54 72 84Q56 84 40 70L26 72 42 80Q6 80-4 50',
  sneaker: 'M-42 20Q-16 22-18-6L-20-16Q14-34 34-32Q46-28 40-16Q20 14-26 44Q-36 46-40 26ZM-30 36Q14 4 32-20M-20-14Q-18 0-12-4M-6-18A2 2 0 1 1-2-18M6-22A2 2 0 1 1 10-22M16-24A2 2 0 1 1 20-24M26-32 28-18',
  voice: 'M-60-8 60-38Q64-40 66-36L62-18 66 8Q66 14 60 16L-46 42Q-54 42-56 36L-64 2Q-64-6-60-8ZM-48 4Q-44-6-40 2V18Q-46 22-46 14ZM-50 14Q-46 28-36 20M-24-2-8 6-22 16ZM-2 4 50-10M36 6 42 10 48-2M44 8 52-4',
  octopus: 'M-40 24Q-46-56 2-57Q34-54 42-10L54 40Q60 60 46 72Q24 100 46 124Q70 136 78 126Q84 116 66 120Q40 116 58 84Q84 56 78 30Q74-10 48-14M-34-4 26-20Q32-6 24 10Q12 22-2 8L-8 8Q-10 28-22 26Q-30 20-34-4ZM-28 2-8-2Q-8 16-18 18Q-26 16-28 2ZM4-6 22-12Q28 2 14 8Q4 6 4-6ZM36-34Q74-48 84-66Q94-68 86-50Q54-20 50 0M62 60Q84 84 100 60Q98 22 108 20Q116 20 112 54Q126 100 96 122Q64 134 40 122M-40 24Q-30 58-48 62Q-66 50-56 16Q-62-2-64 6Q-60 40-90 56M-34 50Q-28 120-74 122Q-96 110-94 78Q-64 44-66 26M-20 100Q-50 136-28 164Q-6 184 10 174M6 116Q-2 150 26 176M44 124Q28 160 54 180M86 126Q76 164 42 170M72 12A8 8 0 0 0 70 26M78 48A9 9 0 0 0 62 60M-70 108A8 8 0 0 1-54 112M110 50A8 8 0 0 0 114 66M102 116A7 7 0 0 1 98 104M70 130A9 9 0 0 1 86 126M2 28Q10 20 12 20Q10 34 4 32Q0 30 2 28Z',
  ball: 'M-23 0A23 23 0 1 1 23 0A23 23 0 1 1-23 0ZM-12-19Q8 0 14 18M14-18Q-6 0-14 18M-22-4Q-6 4-2 22M22 2Q8-6 2-22',
  bookstand: 'M-34-28 26-48 38 8-26 28Q-32 28-34 20ZM-24-28-14 24M-14-30 22-40M-12-20 24-30M-10-10 24-20M-26-26-34-40'
};

// name, x, y, scale, rotation
const placed = [
  ['pin',309,8],['face',383,0],['sparkle',436,8],['bookstand',521,-4,1,6],['popsicle',664,-16,.9],['eye',719,37],['star',816,38],['bolt',885,33],
  ['saturn',607,56],['donut',521,85],['comet',685,82],['sparkle',461,57],['heart',413,67,.8,15],['cloud',366,86],['star',312,85,.9],['sparkle',749,83,.7],
  ['cloud',814,80],['star',892,82,.9],['rocket',403,130],['sparkle',312,134,.8],['sparkle',601,131],['calc',662,150],['banana',749,122],['sparkle',823,122,.8],
  ['cloud',862,143,.9],['flame',530,174],['comet',448,165,.9,-15],['sparkle',469,200,.8],['face',730,197],['plane',812,195],['sparkle',942,178],
  ['saturn',424,235,1,-32],['star',360,225,1,10],['music',574,220],['pin',541,243],['alarm',626,225],['star',578,265,1.1,10],['bottle',669,260],['drop',719,253],
  ['cloud',784,255,.9],['calendar',896,257],['camera',350,277],['sparkle',427,289,1.1],['shades',511,290],['envelope',605,320],['egg',719,287,.8],['cup',803,313],
  ['blob',730,323],['sparkle',679,323],['checks',374,330],['dart',319,333],['avatar',461,357],['face',879,350,.93],['drop',692,283,.9],
  ['lines',42,222],['cloud',141,215,.7],['sparkle',185,220,1.1],['sparkle',971,260,.9],['sparkle',113,260,.9],['badge',256,255,1.1],['monkey',1017,305],['astronaut',164,305],
  ['sparkle',957,317],['sparkle',254,310,.7],['poop',206,68],['gear',270,57],['star',233,130,.95],['sparkle',283,165,.8],['music',790,8],['compass',844,-6,.8],['sparkle',936,5,.9],
  ['phone',729,385],['heart',751,375,.8],['donut',934,390,.9,-30],['heart',385,418,.9],['pencil',301,440],['quotes',347,400],['toggle',476,413],['play',612,425,.9],['cookie',259,370],
  ['teddy',160,360],['mug',46,440],['sparkle',130,437],['pencil',558,445,1,90],['star',536,348,.8],['star',23,110,.9],['cloud',19,55],['star',222,468,.8],
  ['thumb',344,510],['lolly',412,472],['dogface',495,510],['sliders',585,510],['star',312,482,.95],['drink',215,530],['arrowup',434,537],['map',631,582],
  ['bolt',12,588,1.1],['clip',128,678],['star',179,662,.85],['heart',389,682,.9],['mobile',503,680],['lips',604,700],['sparkle',557,656,.9],['mail',160,722],['star',226,724,.85],
  ['scooter',270,765],['bolt',36,720,.8],['passport',396,742],['egg',457,728],['blob',465,775,1.2],['turntable',583,820],['sparkle',167,788],['glasses',358,842],
  ['magnifier',453,870],['star',504,840,.85],['roll',248,875],['sparkle',316,890,.9],['backpack',259,908],['girl',366,940],['heart',546,884,.9],['msg',610,915],['milk',152,918],['lighthouse',70,928],
  ['bike',690,472],['people',845,498,1.1],['bookstand',950,475],['android',795,645],['guitar',965,620],['star',976,560,1.3],['star',841,538,.8],['bolt',900,605,1,-30],
  ['compass',159,610],['saturn',70,635,.95],['bell',912,662,1,-30],['camera',711,678],['quotes',706,620,1.1],['sparkle',864,676,.9],['sparkle',910,710,.9],['pin',853,730],['checks',929,745],['msg',1001,742],
  ['star',733,732,.85],['play',685,757,1.1,15],['octopus',746,808],['ball',857,784],['sneaker',917,815],['avatar',1003,823,.89],['pin',888,878,1.2],['voice',919,928],
  ['drop',1015,512],['drop',14,498,.8],['drop',18,532],['sparkle',44,516,.9],['person',115,540],['plus',141,510],['star',68,582,.95],['lines',262,590],['cloud',235,650,1.1],
  ['alarm',464,600],['quotes',398,582],['star',518,575,.9],['star',417,632,1.1],['lines',336,628,.9,4],['cloud',556,617],['music',664,647,.9],['sparkle',194,852,.7],['bolt',120,877,.9],
  ['sparkle',714,552,.7],['bread',162,985],['sparkle',106,958,.9],['flower',476,962],['submarine',546,1042],['fish',621,980],['cursor',21,1046],['cupcake',28,1124],['tube',118,1120],['note',183,1080],['star',241,1100,1.1],
  ['dog',261,1160],['hands',378,1050,.95],['star',338,1130,.8],['picture',408,1160],['peace',503,1145],['video',606,1095],['person',570,1160],['plus',594,1135],['sparkle',88,1165,.7],
  ['drop',114,1185,1.1],['drop',140,1195,1.1,-15],['drop',121,1218,.7],['heart',178,1186,1.1],['pencil',339,1230],['apple',398,1240],['play',497,1227],['face',600,1227,1.05],['msg',19,1233,.9],['star',67,1235,.9],
  ['bell',114,1262],['laptop',219,1295],['dino',362,1320],['map',495,1297,1,-16],['sparkle',436,1265,.7],['sparkle',559,1267,.7],['heart',443,1347,1.1],['car',546,1372],['mic',13,1335],
  ['gear',644,1024],['people',713,1015,.95],['sparkle',816,1036,.8,30],['starfish',671,1060],['turtle',698,1112],['tulip',771,1072],['camera',798,998],['bell',896,1012,1.2],['burger',978,998],
  ['popsicle',864,1095],['goo',942,1120],['star',971,1053,.85],['dart',75,1052,1.2],['leaf',132,1045],['bolt',239,1018],['music',269,1055],['wink',786,1167],['cat',921,1230],['hi',698,1232],['clover',726,1303],
  ['okhand',824,1280],['gamepad',904,1345],['star',7,1190,.85],['star',1003,1100,.8],['sparkle',774,1233,.9],['cloud',74,1340,1.1],['sparkle',982,1308,.7],['star',116,1306,.85],['starfish',655,1170,1.1]
];

// word, x, y, size, rotation, stroke
const words = [
  ['24',900,272,50,-12,2],['42',246,205,46,-12,2],['W',530,200,30,0,2],['BFF',826,410,38,38,2],['文',74,785,50,8,1],['A',112,795,50,-8,2],
  ['Ж',165,860,44,-16,2],['文',600,1322,48,8,1],['A',636,1344,50,-4,2],['Hi',682,1246,40,0,2]
];

// x, y, radius
const dots = [
  10,19,5,46,22,8,129,11,4,189,5,7,208,19,4,257,15,6,21,86,5,23,141,3,28,165,7,21,189,5,31,258,3,490,215,3,51,340,5,84,337,4,100,362,5,50,370,5,
  84,373,3,17,385,4,40,390,6,61,391,3,95,388,4,20,403,4,8,414,3,100,410,7,101,432,5,319,373,7,358,369,3,386,385,8,304,400,5,412,394,3,403,363,3,
  524,372,4,548,375,5,561,387,4,628,399,4,538,401,6,265,440,9,352,431,3,342,453,7,370,453,3,443,443,5,485,438,6,507,434,6,237,453,4,157,456,4,449,457,4,
  327,36,6,305,49,5,339,56,7,354,42,5,379,47,4,404,40,7,387,56,3,439,35,4,460,20,5,486,44,4,512,42,5,536,31,4,549,47,8,577,37,3,581,7,7,607,5,5,
  605,26,5,628,29,4,643,40,5,665,51,7,687,45,3,640,76,4,660,70,4,722,75,4,770,66,4,748,53,4,778,53,5,766,12,5,768,34,7,918,28,7,851,37,4,867,66,6,
  848,55,3,903,48,4,920,62,7,938,46,7,850,89,5,866,95,5,935,79,5,930,104,7,469,89,4,471,105,4,571,87,3,600,96,5,578,107,4,622,94,4,645,98,7,621,115,6,
  690,116,4,718,102,5,737,114,7,717,123,4,792,126,4,893,116,6,915,116,4,913,136,7,450,136,7,473,129,4,492,125,4,519,124,4,486,151,4,418,170,5,473,175,3,
  592,165,4,402,184,4,586,185,7,611,187,3,776,162,5,781,185,7,829,170,6,887,184,5,904,169,5,421,198,4,442,198,3,402,206,3,318,219,4,392,223,4,314,241,7,
  332,235,4,477,234,5,502,231,4,676,212,5,795,230,4,750,247,5,841,258,4,817,271,4,836,277,3,457,259,7,405,268,4,452,279,4,626,266,3,749,278,4,764,281,5,
  846,292,4,364,306,4,352,327,4,300,311,6,306,276,3,923,321,6,926,338,4,755,347,5,775,344,5,830,343,5,176,39,8,239,37,4,250,84,4,270,87,4,256,98,6,
  187,109,4,196,120,4,191,135,5,206,146,4,229,157,6,252,152,4,265,116,4,283,137,5,145,175,7,168,180,3,197,178,6,124,183,5,57,176,3,35,182,4,999,189,4,
  979,183,7,961,200,4,976,213,4,957,224,6,991,239,5,50,265,5,79,257,4,141,246,4,169,248,5,203,230,5,226,225,4,192,198,4,110,192,3,95,283,4,221,290,7,
  83,299,3,59,301,4,227,318,4,945,344,3,969,338,4,687,358,8,779,358,4,839,362,4,920,356,4,870,391,4,883,399,5,880,418,6,774,399,5,796,423,7,812,442,4,
  790,452,5,775,416,4,668,424,5,681,381,4,663,385,4,866,431,4,889,430,4,898,446,5,783,474,5,692,529,5,812,531,6,887,526,4,924,527,5,953,530,4,939,539,5,
  797,546,4,870,547,6,752,565,6,685,551,4,690,577,7,705,588,5,737,584,7,747,604,4,839,571,5,854,586,8,869,609,5,876,642,4,930,560,5,974,517,8,994,523,4,
  996,537,4,1014,550,6,38,548,3,73,546,7,40,567,5,40,599,6,1004,589,4,94,605,4,115,609,4,106,584,5,126,577,4,165,521,4,241,551,5,258,552,5,177,490,5,
  24,626,4,41,661,7,73,677,8,99,673,5,117,632,3,116,657,5,203,636,3,134,646,3,49,679,4,40,696,5,98,709,7,203,690,4,229,691,3,248,693,8,266,674,4,
  766,686,4,752,696,3,783,706,6,826,713,4,870,707,7,884,719,4,941,687,4,931,697,4,956,697,6,899,742,4,963,759,4,884,758,3,674,708,5,687,721,3,769,729,6,
  796,734,7,816,737,4,780,745,3,31,757,8,1016,773,6,14,780,4,43,774,5,895,778,4,841,815,6,944,831,3,911,853,5,936,849,4,955,854,5,969,867,4,936,872,7,
  32,850,7,58,854,3,35,799,5,54,808,6,98,817,4,42,828,4,64,832,4,81,831,4,117,826,7,101,843,4,123,859,4,194,816,8,209,837,4,232,831,5,259,829,4,
  220,845,3,290,828,6,100,904,6,94,926,4,209,920,4,996,914,4,1000,900,3,311,672,4,327,671,3,348,679,8,319,701,7,342,712,4,360,706,4,424,707,4,434,685,5,
  453,693,4,457,678,4,444,660,6,418,665,5,396,656,3,382,652,5,369,664,3,352,744,6,352,761,4,362,777,7,429,738,4,400,786,4,420,782,4,425,798,6,343,800,5,
  526,742,7,543,748,5,566,763,7,595,757,4,611,759,5,531,769,4,514,782,4,438,812,4,469,815,6,485,809,3,508,809,3,402,880,6,417,893,4,431,897,4,436,917,7,
  458,908,4,476,915,5,513,883,5,523,865,3,536,917,7,560,912,4,575,893,4,593,887,7,614,882,3,530,932,4,587,651,4,496,559,6,548,553,4,562,560,5,553,482,4,
  639,526,4,192,485,3,122,480,4,168,475,6,274,492,5,570,608,8,11,961,5,12,978,4,17,1010,7,40,1008,4,91,999,5,84,971,3,210,1005,6,264,996,4,279,992,4,
  296,980,4,314,981,6,428,953,7,430,977,4,419,1004,3,457,1007,7,477,1007,4,500,1008,5,562,968,4,580,979,5,578,956,6,530,945,5,142,1096,5,272,1085,5,
  280,1099,4,84,1130,4,152,1124,4,176,1128,6,173,1147,7,186,1162,5,152,1167,5,217,1114,4,232,1129,5,221,1140,4,336,1161,6,330,1183,7,347,1192,4,318,1197,4,
  319,1214,4,476,1095,4,463,1105,4,474,1113,3,555,1095,4,546,1111,6,622,1140,6,646,1128,3,608,1164,3,625,1179,4,472,1196,5,525,1206,6,464,1218,7,
  446,1226,5,457,1247,3,546,1218,7,541,1232,4,553,1243,4,532,1247,4,639,1260,7,359,1250,5,181,1215,6,98,1208,4,100,1230,6,51,1194,7,41,1272,7,18,1280,6,
  4,1269,3,65,1272,3,84,1289,6,32,1293,3,59,1296,5,427,1292,4,439,1301,4,438,1315,5,568,1312,4,644,1282,4,500,1354,3,593,1352,4,632,1364,6,471,1367,7,
  665,991,5,726,967,5,843,952,5,854,970,7,876,966,3,844,988,4,869,987,4,846,1005,5,848,1025,6,864,1037,3,922,973,6,926,958,3,48,1019,4,1001,1038,4,
  1006,1055,7,993,1075,4,896,1054,6,917,1055,8,941,1049,5,942,1065,3,926,1075,4,904,1077,3,804,1070,4,829,1069,4,822,1083,3,807,1092,3,816,1113,6,
  163,1034,5,187,1022,5,204,1023,5,171,1019,3,216,1044,4,237,1061,4,80,1094,3,991,1132,5,977,1139,3,998,1156,8,976,1157,4,1003,1173,4,992,1193,4,
  1005,1205,4,722,1166,5,694,1177,4,728,1186,6,707,1187,4,850,1178,4,797,1219,4,813,1219,5,748,1244,4,756,1262,5,772,1280,8,691,1287,4,665,1306,4,
  689,1304,4,673,1323,7,770,1313,4,760,1335,6,718,1345,4,814,1346,5,953,1287,7,933,1293,4,990,1262,4,994,1277,5,1008,1273,4,1011,1298,5,39,1312,5,
  982,1339,4,978,1358,5,993,1362,3,108,1354,5
];

const tileWidth = 1018;
let tile = '';

placed.forEach(([name, x, y, scale = 1, turn = 0]) => {
  tile += `<path transform="translate(${x} ${y}) rotate(${turn}) scale(${scale})" d="${doodles[name]}"/>`;
});
words.forEach(([word, x, y, size, turn, stroke]) => {
  tile += `<text transform="translate(${x} ${y}) rotate(${turn})" font-size="${size}" stroke-width="${stroke}">${word}</text>`;
});
for (let i = 0; i < dots.length; i += 3) {
  tile += `<circle cx="${dots[i]}" cy="${dots[i + 1]}" r="${dots[i + 2]}"/>`;
}

let sheet = `<g id="tile">${tile}</g><use href="#tile" x="${-tileWidth}"/>`;
for (let x = tileWidth; x < window.innerWidth + tileWidth; x += tileWidth) {
  sheet += `<use href="#tile" x="${x}"/>`;
}
document.getElementById('wallpaper').innerHTML = sheet;
```
